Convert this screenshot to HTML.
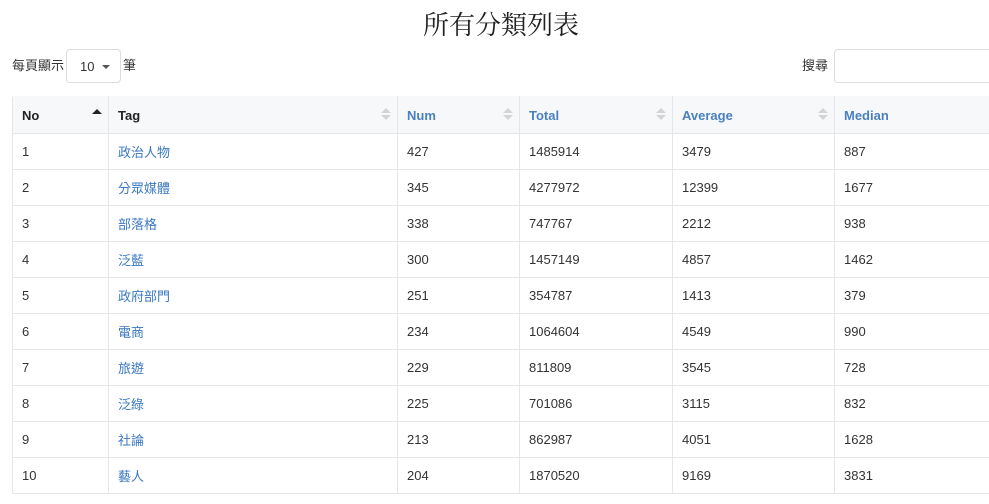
<!DOCTYPE html>
<html><head><meta charset="utf-8"><style>
html,body{margin:0;padding:0;width:989px;height:504px;overflow:hidden;background:#fff;font-family:"Liberation Sans","Noto Sans CJK TC",sans-serif;color:#333;font-size:13px}
h1{position:absolute;top:8px;left:0;width:1002px;text-align:center;margin:0;font-family:"Liberation Serif","Noto Serif CJK SC",serif;font-weight:normal;font-size:26px;color:#222;line-height:36px}
.len{position:absolute;left:12px;top:49px;height:34px;line-height:34px}
.sel{display:inline-block;vertical-align:top;width:53px;height:32px;border:1px solid #ddd;border-radius:4px;margin:0 2px;position:relative}
.sel span{position:absolute;left:13px;top:0}
.sel i{position:absolute;left:35px;top:15px;border-left:4px solid transparent;border-right:4px solid transparent;border-top:4px solid #555}
.srch{position:absolute;left:802px;top:49px;line-height:34px}
.srch .in{position:absolute;left:32px;top:0;width:200px;height:32px;border:1px solid #ddd;border-radius:4px}
table{position:absolute;left:12px;top:96px;border-collapse:collapse;width:1000px;table-layout:fixed}
th,td{border:1px solid #e6e6e6;text-align:left;padding:0 0 0 9px;height:35px;position:relative}
tr:first-child th{border-top-color:#f6f8fa}
td{padding-top:0}
th{background:#f6f8fa;font-weight:bold;height:36px;color:#4a80c0}
th.k{color:#222}
td a{color:#3a78c0;text-decoration:none}
th:after{content:"";position:absolute;right:6px;top:11px;border-left:5px solid transparent;border-right:5px solid transparent;border-bottom:5px solid #d4d4d4}
th:before{content:"";position:absolute;right:6px;top:18px;border-left:5px solid transparent;border-right:5px solid transparent;border-top:5px solid #d4d4d4}
th.no:before{display:none}
th.no:after{border-bottom:5px solid #222;top:12px}
</style></head><body>
<h1>所有分類列表</h1>
<div class="len">每頁顯示<span class="sel"><span>10</span><i></i></span>筆</div>
<div class="srch">搜尋<div class="in"></div></div>
<table>
<colgroup><col style="width:96px"><col style="width:289px"><col style="width:122px"><col style="width:153px"><col style="width:162px"><col style="width:178px"></colgroup>
<tr><th class="k no">No</th><th class="k">Tag</th><th>Num</th><th>Total</th><th>Average</th><th>Median</th></tr>
<tr><td>1</td><td><a>政治人物</a></td><td>427</td><td>1485914</td><td>3479</td><td>887</td></tr>
<tr><td>2</td><td><a>分眾媒體</a></td><td>345</td><td>4277972</td><td>12399</td><td>1677</td></tr>
<tr><td>3</td><td><a>部落格</a></td><td>338</td><td>747767</td><td>2212</td><td>938</td></tr>
<tr><td>4</td><td><a>泛藍</a></td><td>300</td><td>1457149</td><td>4857</td><td>1462</td></tr>
<tr><td>5</td><td><a>政府部門</a></td><td>251</td><td>354787</td><td>1413</td><td>379</td></tr>
<tr><td>6</td><td><a>電商</a></td><td>234</td><td>1064604</td><td>4549</td><td>990</td></tr>
<tr><td>7</td><td><a>旅遊</a></td><td>229</td><td>811809</td><td>3545</td><td>728</td></tr>
<tr><td>8</td><td><a>泛綠</a></td><td>225</td><td>701086</td><td>3115</td><td>832</td></tr>
<tr><td>9</td><td><a>社論</a></td><td>213</td><td>862987</td><td>4051</td><td>1628</td></tr>
<tr><td>10</td><td><a>藝人</a></td><td>204</td><td>1870520</td><td>9169</td><td>3831</td></tr>
</table>
</body></html>
